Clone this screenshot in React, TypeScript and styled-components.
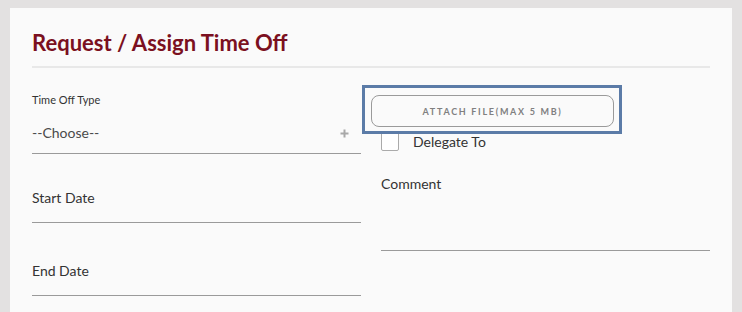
import React from "react";
import styled, { createGlobalStyle } from "styled-components";

const Global = createGlobalStyle`
  html, body { margin: 0; padding: 0; background: #e3e1e1; }
  body { font-family: Lato, "Open Sans", "Liberation Sans", sans-serif; }
  * { box-sizing: border-box; }
`;

const Page = styled.div`
  padding: 8px 10px 0 10px;
  height: 312px;
  overflow: hidden;
`;

const Card = styled.div`
  background: #fafafa;
  height: 100%;
  padding: 22px 22px 0 22px;
`;

const Title = styled.h2`
  margin: 0;
  font-size: 22px;
  line-height: 26px;
  font-weight: 700;
  color: #7b1020;
  padding-bottom: 10px;
  border-bottom: 2px solid #e8e8e8;
`;

const Columns = styled.div`
  display: grid;
  grid-template-columns: 1fr 1fr;
  column-gap: 20px;
`;

const Column = styled.div`
  display: flex;
  flex-direction: column;
`;

const Field = styled.div<{ $h: number }>`
  height: ${(p) => p.$h}px;
  display: flex;
  flex-direction: column;
  justify-content: flex-end;
  border-bottom: 1px solid #9a9a9a;
  padding-bottom: ${(p) => (p.$h > 80 ? 10 : 14)}px;
`;

const SmallLabel = styled.div`
  font-size: 11px;
  line-height: 14px;
  color: #333;
  margin-bottom: 16px;
`;

const SelectRow = styled.div`
  display: flex;
  align-items: center;
  justify-content: space-between;
  font-size: 14px;
  line-height: 20px;
  color: #4a4a4a;
  padding-right: 12px;
`;

const FieldText = styled.div`
  font-size: 14px;
  line-height: 20px;
  color: #333;
`;

const FocusBox = styled.div`
  margin-top: 17px;
  margin-left: -19px;
  width: 260px;
  height: 49px;
  border: 3px solid #5b7ba7;
  padding: 7px 5px 4px 6px;
  position: relative;
  z-index: 1;
`;

const AttachButton = styled.button`
  width: 100%;
  height: 32px;
  border: 1px solid #9a9a9a;
  border-radius: 8px;
  background: #fafafa;
  font-family: Lato, "Open Sans", "Liberation Sans", sans-serif;
  font-size: 9px;
  font-weight: 700;
  letter-spacing: 1.7px;
  color: #808080;
  text-transform: uppercase;
  padding: 0;
  cursor: pointer;
`;

const CheckRow = styled.label`
  display: flex;
  align-items: center;
  gap: 14px;
  margin-top: -3px;
  font-size: 14px;
  color: #333;
`;

const Box = styled.span`
  width: 18px;
  height: 20px;
  border: 1px solid #aaa;
  border-radius: 2px;
  background: #fff;
`;

const CommentField = styled.div`
  margin-top: 23px;
  height: 77px;
  border-bottom: 1px solid #9a9a9a;
`;

const Plus = () => (
  <svg width="9" height="9" viewBox="0 0 9 9">
    <path d="M4.5 0.5v8M0.5 4.5h8" stroke="#a8a8a8" strokeWidth="2" />
  </svg>
);

export default function App() {
  return (
    <>
      <Global />
      <Page>
        <Card>
          <Title>Request / Assign Time Off</Title>
          <Columns>
            <Column>
              <Field $h={86}>
                <SmallLabel>Time Off Type</SmallLabel>
                <SelectRow>
                  <span>--Choose--</span>
                  <Plus />
                </SelectRow>
              </Field>
              <Field $h={69}>
                <FieldText>Start Date</FieldText>
              </Field>
              <Field $h={73}>
                <FieldText>End Date</FieldText>
              </Field>
            </Column>
            <Column>
              <FocusBox>
                <AttachButton>Attach File(Max 5 MB)</AttachButton>
              </FocusBox>
              <CheckRow>
                <Box />
                <span>Delegate To</span>
              </CheckRow>
              <CommentField>
                <FieldText>Comment</FieldText>
              </CommentField>
            </Column>
          </Columns>
        </Card>
      </Page>
    </>
  );
}
